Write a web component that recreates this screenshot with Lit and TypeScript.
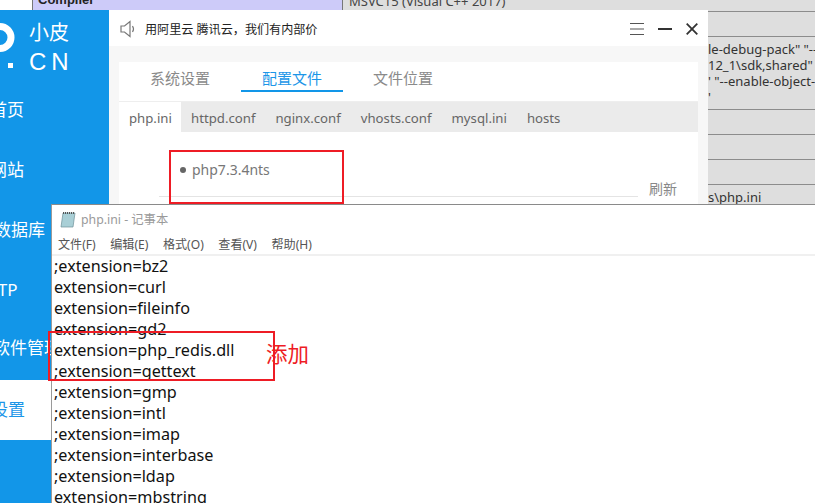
import { LitElement, html, css, svg } from "lit";
import { customElement } from "lit/decorators.js";

const LINES = [";extension=bz2","extension=curl","extension=fileinfo","extension=gd2","extension=php_redis.dll",";extension=gettext",";extension=gmp",";extension=intl",";extension=imap",";extension=interbase",";extension=ldap","extension=mbstring"];
const NAV = [
  { t: "首页", x: -10, y: 88 },
  { t: "网站", x: -10, y: 148 },
  { t: "数据库", x: -6, y: 208 },
  { t: "FTP", x: -11, y: 268 },
  { t: "软件管理", x: -7, y: 326 },
];
const CELLS = [
  { t: 'le-debug-pack" "--', y: 42 },
  { t: '12_1\\sdk,shared" "', y: 58 },
  { t: `' "--enable-object-`, y: 74 },
  { t: "'", y: 90 },
  { t: "s\\php.ini", y: 190 },
];

@customElement("app-root")
export class AppRoot extends LitElement {
  static styles = css`
    :host { display:block; width:815px; height:503px; position:relative; overflow:hidden; background:#dedede;
      font-family:"Noto Sans","Noto Sans CJK SC",sans-serif; }
    .bg-white { position:absolute; left:0; top:0; width:32px; height:10px; background:#fff; }
    .compiler { position:absolute; left:32px; top:-8px; width:311px; height:18px; background:#cdcbf9; border-left:1px solid #777; border-right:1px solid #777; box-sizing:border-box;
      font:bold 13px/16px "Liberation Sans",sans-serif; color:#222; padding-left:5px; }
    .msvc { position:absolute; left:349px; top:-7px; font:13px/16px "Noto Sans",sans-serif; color:#444; white-space:nowrap; }
    .table { position:absolute; left:708px; top:0; width:107px; height:210px; overflow:hidden; }
    .rule { position:absolute; left:0; right:0; height:1px; background:#8c8c8c; }
    .cell { position:absolute; left:0; font:13px/15px "Noto Sans",sans-serif; color:#333; white-space:nowrap; }

    .studio { position:absolute; left:0; top:10px; width:708px; height:493px; display:flex; background:#f7f7f7; }
    .side { width:109px; background:#1296e8; color:#fff; position:relative; overflow:hidden; flex:none; }
    .logo-p { position:absolute; left:0; top:0; }
    .logo-a { position:absolute; left:29px; top:8px; font-size:20px; line-height:30px; }
    .logo-b { position:absolute; left:29px; top:37px; font-size:24px; line-height:30px; letter-spacing:5px; font-family:"Liberation Sans",sans-serif; }
    .dot { position:absolute; left:8px; top:53px; width:5px; height:5px; background:#fff; }
    .nav { position:absolute; font-size:17px; line-height:24px; white-space:nowrap; }
    .active { position:absolute; left:0; right:0; top:370px; height:60px; background:#fff; color:#1c96e8; font-size:17px; line-height:60px; text-indent:-9px; }
    .main { flex:1; display:flex; flex-direction:column; min-width:0; }
    .bar { height:36px; background:#fff; display:flex; align-items:center; padding:2px 10px 0 11px; box-sizing:border-box; flex:none; }
    .bar .msg { font-size:12.1px; color:#222; margin-left:9px; flex:1; }
    .ctl { display:flex; gap:14px; align-items:center; }
    .card { margin:16px 10px 0; background:#fff; flex:1; display:flex; flex-direction:column; min-height:0; }
    .tabs { display:flex; height:39px; border-bottom:1px solid #eee; padding-left:13px; box-sizing:content-box; flex:none; }
    .tab { font-size:15px; color:#8a8a8a; padding-top:4px; line-height:24px; box-sizing:border-box; height:30px; }
    .tab.first { width:109px; padding-left:18px; }
    .tab.on { color:#1c96e8; border-bottom:2px solid #1296e8; width:102px; padding-left:21px; }
    .tab.third { padding-left:30px; }
    .sub { display:flex; height:30px; background:#ebebeb; flex:none; font-size:13.2px; line-height:32px; color:#666; }
    .sub span { padding:0 10px; }
    .sub span:first-child { background:#fff; width:62px; box-sizing:border-box; }
    .body { flex:1; position:relative; }
    .ver { position:absolute; left:61px; top:29px; font-size:14px; line-height:18px; color:#777; white-space:nowrap; }
    .ver i { display:inline-block; width:6px; height:6px; border-radius:50%; background:#666; vertical-align:2px; margin-right:6px; }
    .hr { position:absolute; left:40px; width:479px; top:64px; height:1px; background:#e4e4e4; }
    .refresh { position:absolute; left:530px; top:48px; font-size:14px; line-height:18px; color:#888; }

    .note { position:absolute; left:51px; top:204px; width:764px; height:299px; background:#fff; border-top:1px solid #8a8a8a; border-left:1px solid #9a9a9a; box-sizing:border-box; }
    .title { height:28px; display:flex; align-items:center; padding:0 0 0 8px; box-sizing:border-box; gap:5px; font-size:12.3px; color:#9a9a9a; }
    .menu { height:21px; display:flex; font-size:12.1px; line-height:24px; color:#555; padding-left:6px; gap:14.5px; border-bottom:2px solid #f0f0f0; box-sizing:content-box; }
    .text { padding:0 0 0 2px; font-size:16.2px; line-height:21px; color:#111; white-space:nowrap; }

    .redbox { position:absolute; border:2px solid #ee1c25; box-sizing:border-box; }
    .b1 { left:169px; top:150px; width:175px; height:54px; }
    .b2 { left:48px; top:331px; width:227px; height:50px; }
    .add { position:absolute; left:266px; top:340px; font-size:21.5px; line-height:27px; color:#ee1c25; }
  `;

  render() {
    return html`
      <div class="bg-white"></div>
      <div class="compiler">Compiler</div>
      <div class="msvc">MSVC15 (Visual C++ 2017)</div>
      <div class="table">
        ${[11,36,109,134,159,184].map(y => html`<div class="rule" style="top:${y}px"></div>`)}
        ${CELLS.map(c => html`<div class="cell" style="top:${c.y}px">${c.t}</div>`)}
      </div>

      <div class="studio">
        <div class="side">
          ${svg`<svg class="logo-p" width="20" height="50" viewBox="0 0 20 50" fill="none" stroke="#fff" stroke-width="7"><path d="M-3 16.500H0A11 11 0 0 1 0 38.500H-3"/></svg>`}
          <div class="dot"></div>
          <div class="logo-a">小皮</div><div class="logo-b">CN</div>
          ${NAV.map(n => html`<div class="nav" style="left:${n.x}px;top:${n.y}px">${n.t}</div>`)}
          <div class="active">设置</div>
        </div>
        <div class="main">
          <div class="bar">
            ${svg`<svg width="16" height="18" viewBox="0 0 16 18" fill="none" stroke="#777" stroke-width="1.2"><path d="M1 6h3.500L10 1.500v15L4.500 12H1zM12.500 6c1.200 1.800 1.200 4.200 0 6"/></svg>`}
            <div class="msg">用阿里云 腾讯云，我们有内部价</div>
            <div class="ctl">
              ${svg`<svg width="14" height="12" viewBox="0 0 14 12" stroke="#555" stroke-width="1"><path d="M0 .5h14M0 6h14M0 11.500h14"/></svg>`}
              ${svg`<svg width="14" height="4" viewBox="0 0 14 4" stroke="#333" stroke-width="2"><path d="M0 2h14"/></svg>`}
              ${svg`<svg width="12" height="12" viewBox="0 0 12 12" stroke="#333" stroke-width="1.8"><path d="M.7.7l10.600 10.600M11.300.7L.7 11.300"/></svg>`}
            </div>
          </div>
          <div class="card">
            <div class="tabs">
              <div class="tab first">系统设置</div>
              <div class="tab on">配置文件</div>
              <div class="tab third">文件位置</div>
            </div>
            <div class="sub"><span>php.ini</span><span>httpd.conf</span><span>nginx.conf</span><span>vhosts.conf</span><span>mysql.ini</span><span>hosts</span></div>
            <div class="body">
              <div class="ver"><i></i>php7.3.4nts</div>
              <div class="hr"></div>
              <div class="refresh">刷新</div>
            </div>
          </div>
        </div>
      </div>

      <div class="redbox b1"></div>

      <div class="note">
        <div class="title">
          ${svg`<svg width="16" height="17" viewBox="0 0 16 17"><path d="M3 2h12l-2 14H1z" fill="#a9cfd6" stroke="#6d8f98" stroke-width=".7"/><path d="M3 2h12" stroke="#555" stroke-width="2" stroke-dasharray="1 1"/></svg>`}
          <span>php.ini - 记事本</span>
        </div>
        <div class="menu"><span>文件(F)</span><span>编辑(E)</span><span>格式(O)</span><span>查看(V)</span><span>帮助(H)</span></div>
        <div class="text">${LINES.map(l => html`<div>${l}</div>`)}</div>
      </div>
      <div class="redbox b2"></div>
      <div class="add">添加</div>
    `;
  }
}
